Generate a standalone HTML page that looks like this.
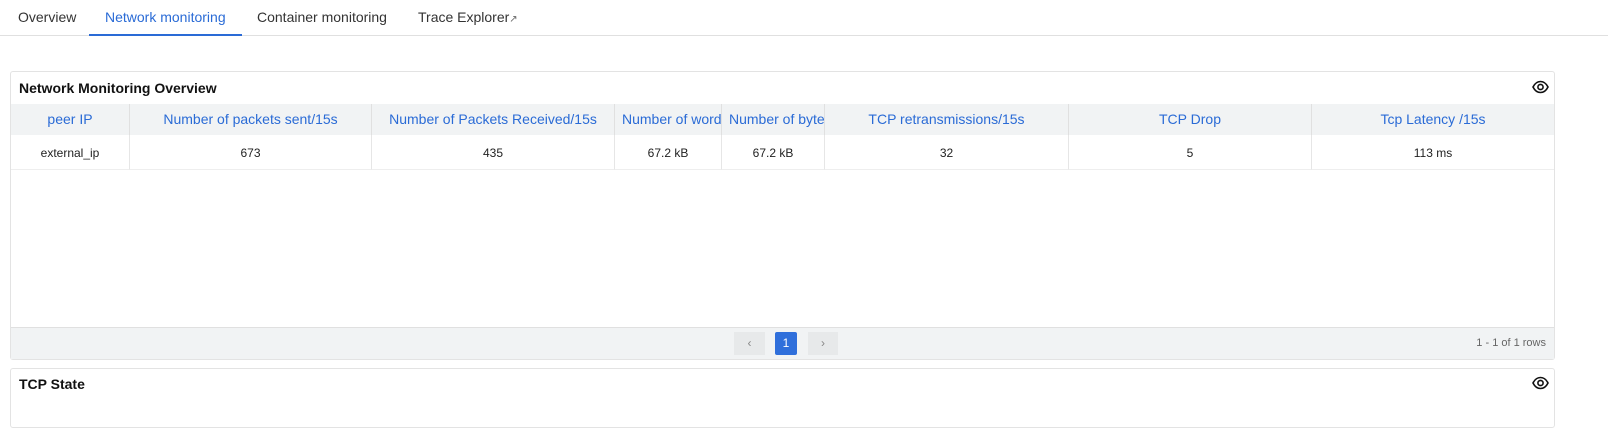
<!DOCTYPE html><html><head><style>
*{box-sizing:border-box;margin:0;padding:0}
body{width:1608px;height:411px;overflow:hidden;background:#fff;font-family:"Liberation Sans",sans-serif;position:relative;color:#222}
.abs{position:absolute}
.tab{position:absolute;top:9px;font-size:14px;color:#333}
.panel{position:absolute;left:10px;width:1545px;border:1px solid #e3e3e3;border-radius:3px;background:#fff}
.title{position:absolute;left:8px;font-size:14px;font-weight:bold;color:#111}
.hd{position:absolute;top:104px;height:31px;background:#f1f3f4;color:#2a6bd6;font-size:14px;text-align:center;line-height:31px;white-space:nowrap;overflow:hidden;border-left:1px solid #e0e0e0}
.td{position:absolute;top:135px;height:35px;font-size:12px;text-align:center;line-height:37px;border-left:1px solid #e6e6e6;border-bottom:1px solid #eee;color:#222}
</style></head><body>
<div class="tab" style="left:18px">Overview</div>
<div class="tab" style="left:105px;color:#2a6bd6">Network monitoring</div>
<div class="tab" style="left:257px">Container monitoring</div>
<div class="tab" style="left:418px">Trace Explorer<span style="font-size:10px;color:#666">↗</span></div>
<div class="abs" style="left:0;top:35px;width:1608px;height:1px;background:#e0e0e0"></div>
<div class="abs" style="left:89px;top:34px;width:153px;height:2px;background:#2a6bd6"></div>

<div class="panel" style="top:71px;height:289px"></div>
<div class="title" style="left:19px;top:80px">Network Monitoring Overview</div>
<svg class="abs" style="left:1532px;top:80px" width="17" height="14" viewBox="0 0 17 14"><path d="M1 7C3 3 6 1.5 8.5 1.5S14 3 16 7C14 11 11 12.5 8.5 12.5S3 11 1 7Z" fill="none" stroke="#111" stroke-width="1.6"/><circle cx="8.5" cy="7" r="2.6" fill="none" stroke="#111" stroke-width="1.6"/></svg>

<div class="hd" style="left:11px;width:118px;border-left:none">peer IP</div>
<div class="hd" style="left:129px;width:242px">Number of packets sent/15s</div>
<div class="hd" style="left:371px;width:243px">Number of Packets Received/15s</div>
<div class="hd" style="left:614px;width:107px;text-align:left;padding-left:7px">Number of words</div>
<div class="hd" style="left:721px;width:103px;text-align:left;padding-left:7px">Number of bytes</div>
<div class="hd" style="left:824px;width:244px">TCP retransmissions/15s</div>
<div class="hd" style="left:1068px;width:243px">TCP Drop</div>
<div class="hd" style="left:1311px;width:243px">Tcp Latency /15s</div>

<div class="td" style="left:11px;width:118px;border-left:none">external_ip</div>
<div class="td" style="left:129px;width:242px">673</div>
<div class="td" style="left:371px;width:243px">435</div>
<div class="td" style="left:614px;width:107px">67.2 kB</div>
<div class="td" style="left:721px;width:103px">67.2 kB</div>
<div class="td" style="left:824px;width:244px">32</div>
<div class="td" style="left:1068px;width:243px">5</div>
<div class="td" style="left:1311px;width:243px">113 ms</div>

<div class="abs" style="left:11px;top:327px;width:1543px;height:32px;background:#f1f3f4;border-top:1px solid #e0e0e0"></div>
<div class="abs" style="left:734px;top:332px;width:31px;height:23px;background:#e7e9ea;color:#888;font-size:12px;text-align:center;line-height:23px">‹</div>
<div class="abs" style="left:775px;top:332px;width:22px;height:23px;background:#2f6fdb;color:#fff;font-size:12px;text-align:center;line-height:23px;border-radius:2px">1</div>
<div class="abs" style="left:808px;top:332px;width:30px;height:23px;background:#e7e9ea;color:#888;font-size:12px;text-align:center;line-height:23px">›</div>
<div class="abs" style="right:62px;top:337px;font-size:11px;color:#666">1 - 1 of 1 rows</div>

<div class="panel" style="top:368px;height:60px"></div>
<div class="title" style="left:19px;top:376px">TCP State</div>
<svg class="abs" style="left:1532px;top:376px" width="17" height="14" viewBox="0 0 17 14"><path d="M1 7C3 3 6 1.5 8.5 1.5S14 3 16 7C14 11 11 12.5 8.5 12.5S3 11 1 7Z" fill="none" stroke="#111" stroke-width="1.6"/><circle cx="8.5" cy="7" r="2.6" fill="none" stroke="#111" stroke-width="1.6"/></svg>
</body></html>
